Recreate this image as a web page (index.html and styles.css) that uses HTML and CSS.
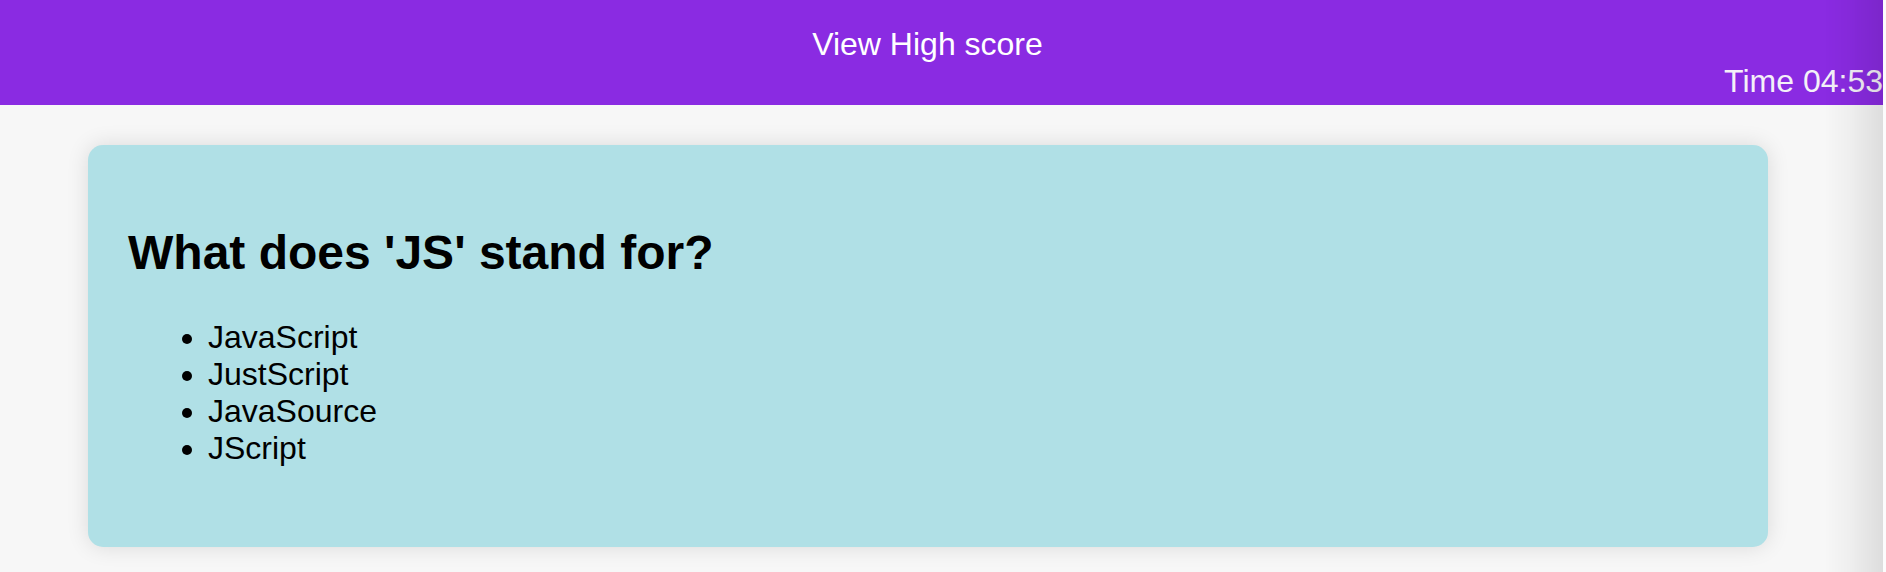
FILE: index.html
```html
<!DOCTYPE html>
<html lang="en">
<head>
<meta charset="utf-8">
<title>Quiz</title>
<link rel="stylesheet" href="styles.css">
</head>
<body>
<header class="topbar">
  <a class="highscore" href="#">View High score</a>
  <div class="timer">Time 04:53</div>
</header>
<main class="main">
  <section class="card">
    <h1 class="question">What does 'JS' stand for?</h1>
    <ul class="answers">
      <li>JavaScript</li>
      <li>JustScript</li>
      <li>JavaSource</li>
      <li>JScript</li>
    </ul>
  </section>
</main>
<div class="edge-shade"></div>
</body>
</html>
```

FILE: styles.css
```css
html, body {
  margin: 0;
  padding: 0;
  background: #f7f7f7;
  font-family: "Liberation Sans", Arial, sans-serif;
  height: 100%;
  overflow: hidden;
}

.topbar {
  width: 1883px;
  height: 105px;
  box-sizing: border-box;
  background: #8a2be2;
  color: #ffffff;
  font-size: 32px;
  line-height: 37px;
  padding-top: 26px;
  display: flex;
  flex-direction: column;
}

.highscore {
  color: #ffffff;
  text-decoration: none;
  align-self: flex-start;
  width: 1855px;
  text-align: center;
}

.timer {
  text-align: right;
  color: #f4f0f8;
}

.main {
  width: 1856px;
  padding-top: 40px;
}

.card {
  width: 1680px;
  margin: 0 auto;
  box-sizing: border-box;
  background: #b0e0e6;
  border-radius: 15px;
  box-shadow: 0 0 22px rgba(0, 0, 0, 0.12);
  padding: 80px 40px 81px;
  height: 402px;
  font-size: 32px;
  color: #000;
}

.question {
  margin: 0 0 39px;
  font-size: 48px;
  font-weight: bold;
  line-height: 55px;
}

.answers {
  margin: 0;
  padding-left: 80px;
  line-height: 37px;
}

.edge-shade {
  position: fixed;
  top: 0;
  bottom: 0;
  right: 0;
  width: 62px;
  background:
    linear-gradient(to right, rgba(0,0,0,0) 0, rgba(0,0,0,0.03) 40%, rgba(0,0,0,0.1) 95%, rgba(255,255,255,0.6) 95.2%, rgba(255,255,255,0.6) 100%);
  pointer-events: none;
}
```
